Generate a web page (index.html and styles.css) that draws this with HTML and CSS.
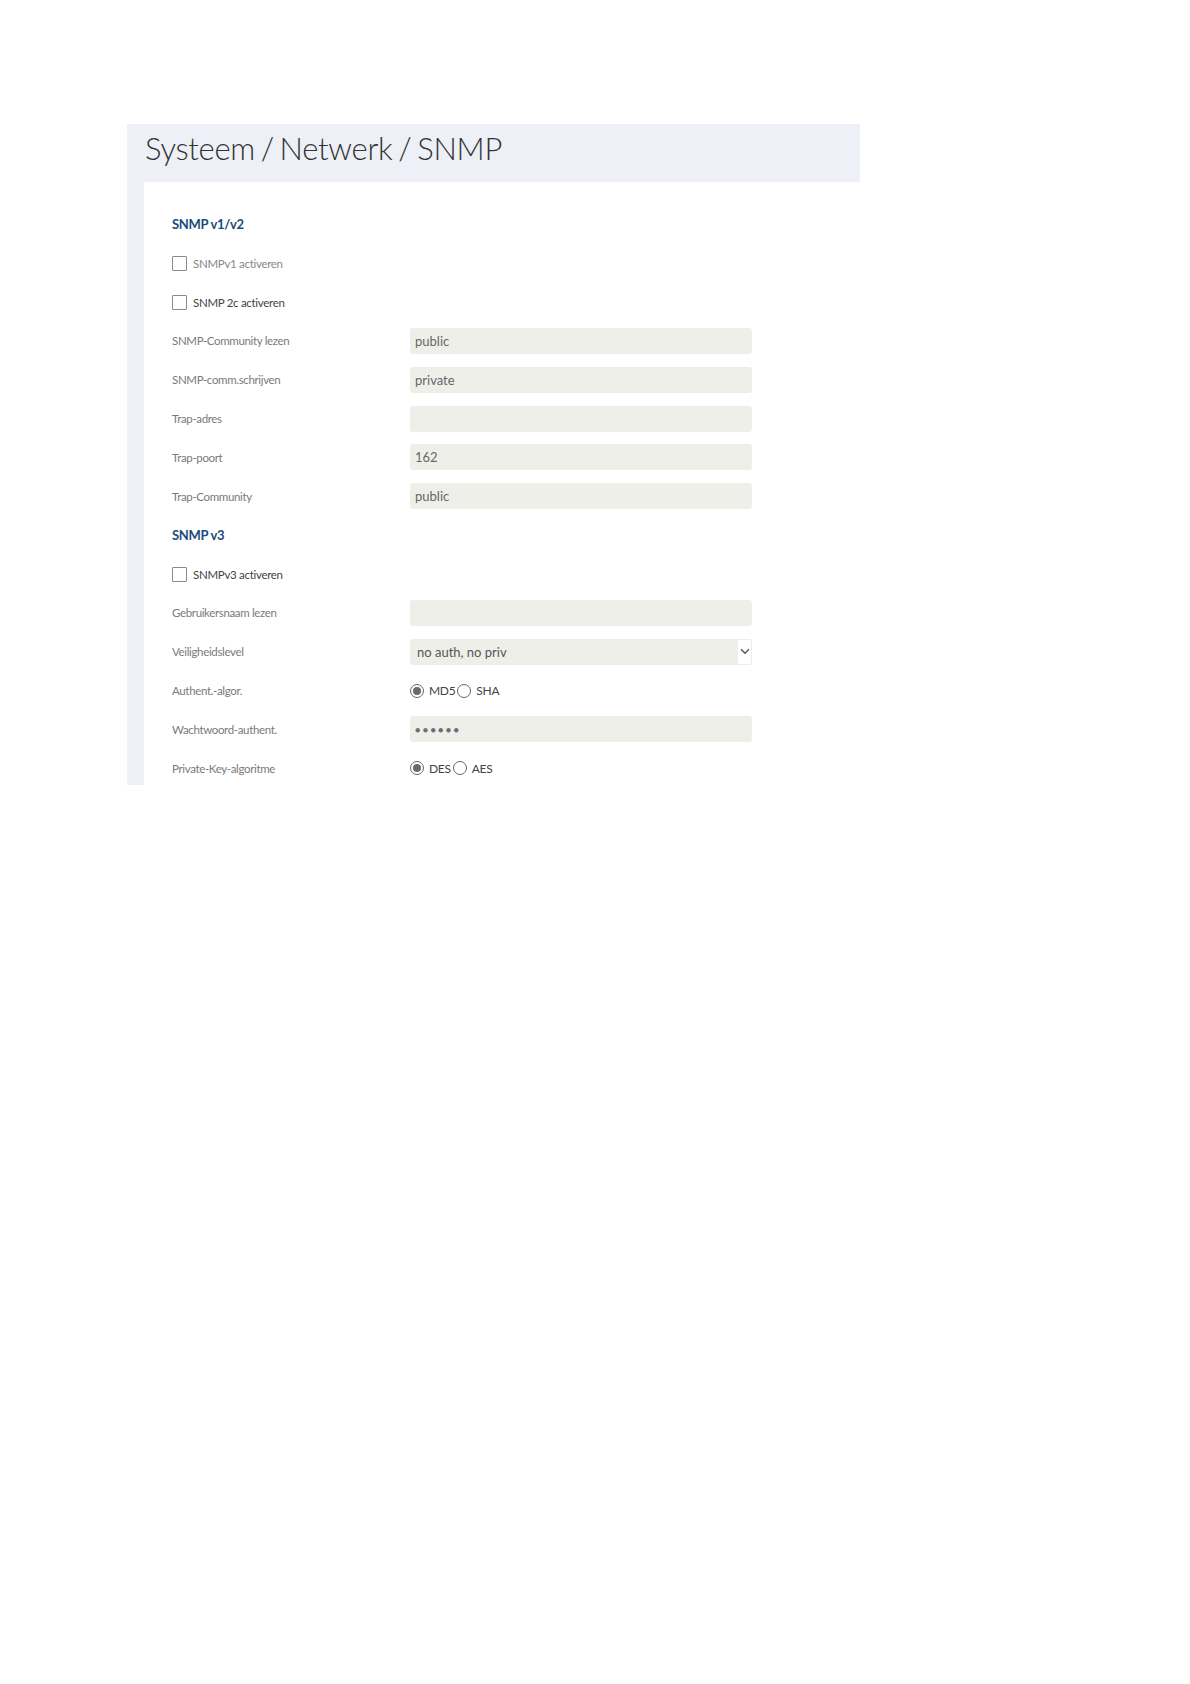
FILE: index.html
```html
<!DOCTYPE html>
<html lang="nl">
<head>
  <meta charset="UTF-8" />
  <title>Systeem / Netwerk / SNMP</title>
  <link rel="stylesheet" href="styles.css">
</head>
<body>

  <div class="panel">
    <h1 class="page-title">Systeem / Netwerk / SNMP</h1>

    <div class="card">
      <div class="row"><h2 class="section">SNMP v1/v2</h2></div>

      <div class="row">
        <label class="check light"><span class="box"></span>SNMPv1 activeren</label>
      </div>
      <div class="row">
        <label class="check"><span class="box"></span>SNMP 2c activeren</label>
      </div>

      <div class="row">
        <span class="label">SNMP-Community lezen</span>
        <div class="field">public</div>
      </div>
      <div class="row">
        <span class="label">SNMP-comm.schrijven</span>
        <div class="field">private</div>
      </div>
      <div class="row">
        <span class="label">Trap-adres</span>
        <div class="field"></div>
      </div>
      <div class="row">
        <span class="label">Trap-poort</span>
        <div class="field">162</div>
      </div>
      <div class="row">
        <span class="label">Trap-Community</span>
        <div class="field">public</div>
      </div>

      <div class="row"><h2 class="section">SNMP v3</h2></div>

      <div class="row">
        <label class="check"><span class="box"></span>SNMPv3 activeren</label>
      </div>
      <div class="row">
        <span class="label">Gebruikersnaam lezen</span>
        <div class="field"></div>
      </div>
      <div class="row">
        <span class="label">Veiligheidslevel</span>
        <div class="field select">
          no auth, no priv
          <span class="arrow">
            <svg width="10" height="7" viewBox="0 0 10 7"><path d="M1 1.2 L5 5.2 L9 1.2" fill="none" stroke="#555" stroke-width="1.4"/></svg>
          </span>
        </div>
      </div>
      <div class="row">
        <span class="label">Authent.-algor.</span>
        <div class="radios">
          <span class="radio on"></span><span class="opt">MD5</span>
          <span class="radio"></span><span class="opt">SHA</span>
        </div>
      </div>
      <div class="row">
        <span class="label">Wachtwoord-authent.</span>
        <div class="field dots">&#9679;&#9679;&#9679;&#9679;&#9679;&#9679;</div>
      </div>
      <div class="row">
        <span class="label">Private-Key-algoritme</span>
        <div class="radios">
          <span class="radio on"></span><span class="opt">DES</span>
          <span class="radio"></span><span class="opt">AES</span>
        </div>
      </div>
    </div>
  </div>

</body>
</html>
```

FILE: styles.css
```css
:root {
  --panel-bg: #edf0f6;
  --field-bg: #efefea;
  --label: #7a7a7a;
  --heading: #1b4b7b;
}

body {
  margin: 0;
  background: #fff;
  font-family: Lato, "Open Sans", "Liberation Sans", sans-serif;
}

.panel {
  margin: 124px 0 0 127px;
  width: 733px;
  height: 661px;
  overflow: hidden;
  background: var(--panel-bg);
  display: flex;
  flex-direction: column;
}

.page-title {
  flex-shrink: 0;
  margin: 0;
  height: 58px;
  padding: 0 0 10px 18px;
  display: flex;
  align-items: center;
  font-size: 31px;
  font-weight: 300;
  color: #333;
  letter-spacing: -0.3px;
  word-spacing: -2.4px;
  box-sizing: border-box;
}

.card {
  flex-shrink: 0;
  margin-left: 17px;
  background: #fff;
  padding: 23px 0 0 28px;
}

.row {
  height: 38.85px;
  display: flex;
  align-items: center;
}

.section {
  margin: 0;
  font-size: 13px;
  font-weight: 700;
  color: var(--heading);
  letter-spacing: -0.3px;
}

.check {
  display: flex;
  align-items: center;
  font-size: 11.5px;
  color: #444;
  letter-spacing: -0.3px;
}

.check.light {
  color: #888;
}

.box {
  width: 13px;
  height: 13px;
  border: 1px solid #8a8a8a;
  border-radius: 1px;
  margin-right: 6px;
  background: #fff;
}

.label {
  width: 238px;
  font-size: 11.5px;
  color: var(--label);
  letter-spacing: -0.35px;
}

.field {
  width: 342px;
  height: 26px;
  box-sizing: border-box;
  background: var(--field-bg);
  border-radius: 3px;
  padding: 0 5px;
  display: flex;
  align-items: center;
  font-size: 13px;
  color: #666;
  position: relative;
}

.select {
  padding-left: 7px;
  color: #555;
}

.select .arrow {
  position: absolute;
  right: 0;
  top: 0;
  width: 15px;
  height: 100%;
  background: #fff;
  border: 1px solid #eee;
  border-radius: 0 3px 3px 0;
  box-sizing: border-box;
  display: flex;
  align-items: center;
  justify-content: center;
}

.dots {
  font-size: 9px;
  letter-spacing: 2.3px;
  color: #6e6e7c;
}

.radios {
  display: flex;
  align-items: center;
}

.radio {
  width: 12px;
  height: 12px;
  border: 1px solid #666;
  border-radius: 50%;
  background: #fff;
  position: relative;
}

.radio.on::after {
  content: "";
  position: absolute;
  left: 2px;
  top: 2px;
  width: 8px;
  height: 8px;
  border-radius: 50%;
  background: #6a6a6a;
}

.opt {
  font-size: 12px;
  color: #444;
  margin: 0 2px 0 5px;
  letter-spacing: -0.3px;
}
```
